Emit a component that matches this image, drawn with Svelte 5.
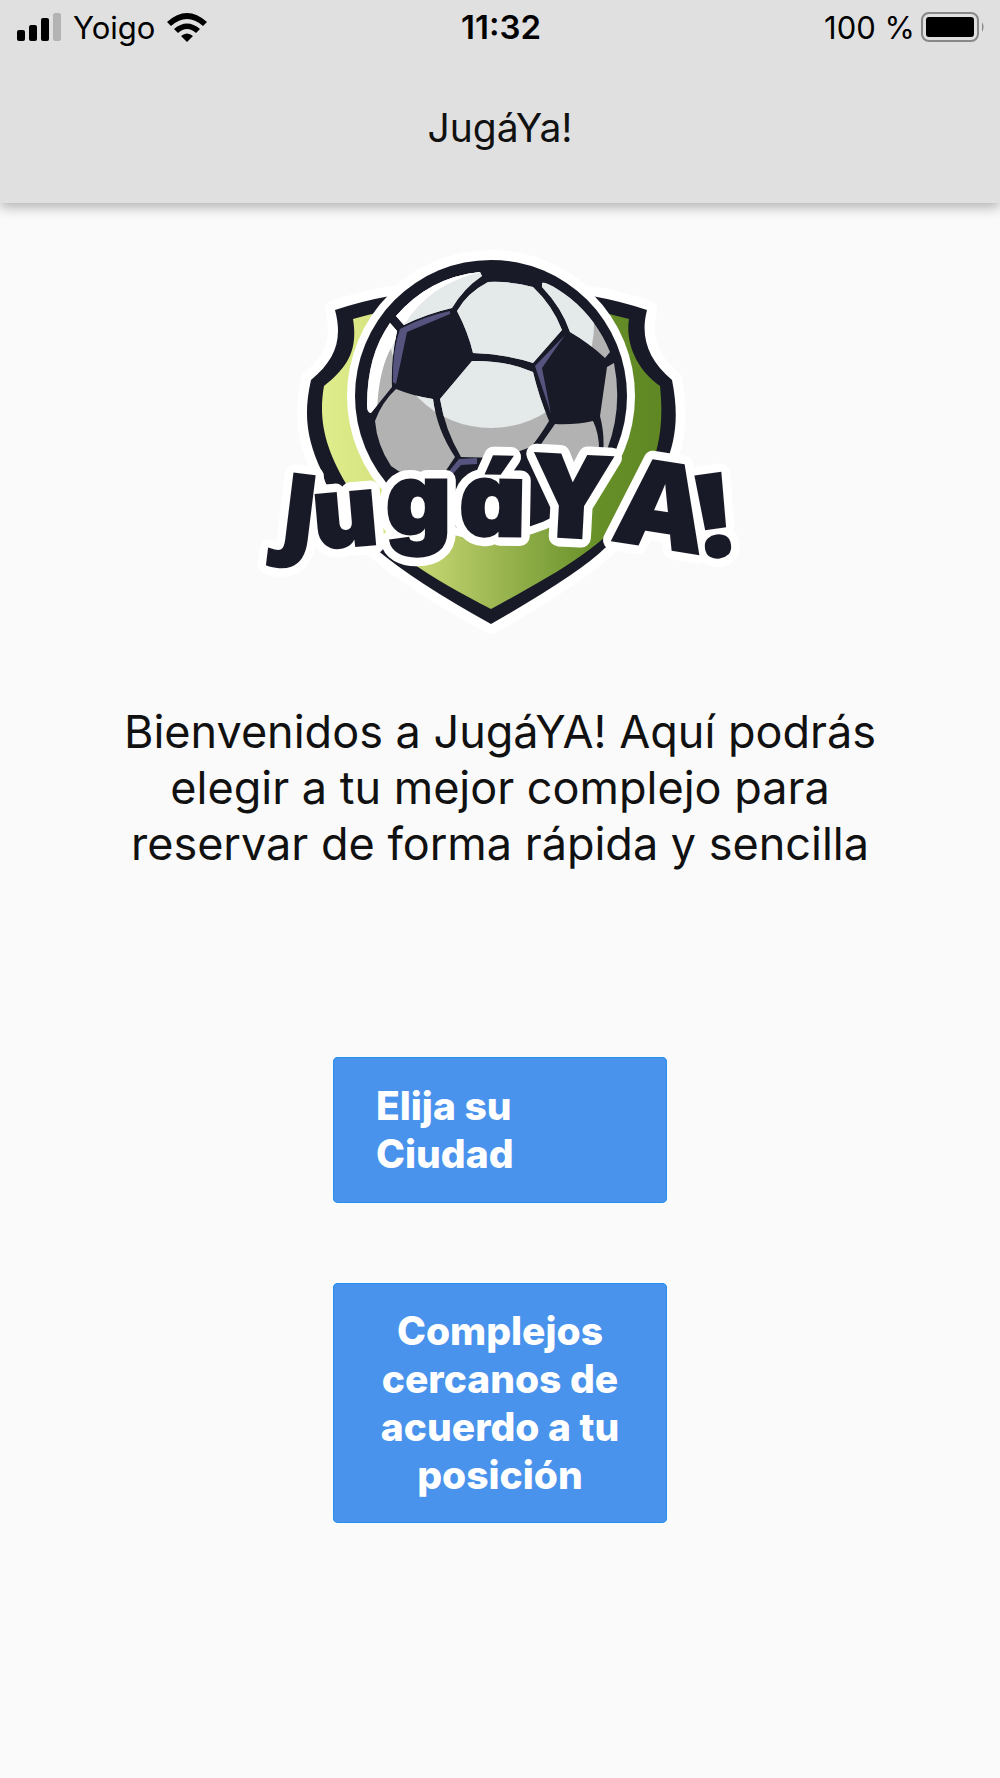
<script lang="ts">
  const carrier = "Yoigo";
  const time = "11:32";
  const battery = 100;

  // each letter of the wordmark leans a little differently
  const letters = [
    { char: "J", x: 278, y: 544, size: 100, angle: 7, face: "square" },
    { char: "u", x: 316, y: 549, size: 98, angle: -5, face: "round" },
    { char: "g", x: 386, y: 535, size: 100, angle: 0, face: "round" },
    { char: "á", x: 459, y: 535, size: 102, angle: 1, face: "round" },
    { char: "Y", x: 532, y: 535, size: 114, angle: 3, face: "square" },
    { char: "A", x: 613, y: 540, size: 118, angle: 9, face: "square" },
    { char: "!", x: 703, y: 558, size: 114, angle: -8, face: "square" },
  ];
</script>

<div class="page">
  <header class="header">
    <div class="status">
      <div class="status_left">
        <svg class="signal" viewBox="0 0 44 28" aria-hidden="true">
          <rect x="0" y="17" width="8" height="11" rx="2" />
          <rect x="12" y="12" width="8" height="16" rx="2" />
          <rect x="24" y="5" width="8" height="23" rx="2" />
          <rect x="36" y="0" width="8" height="28" rx="2" opacity="0.2" />
        </svg>
        <span>{carrier}</span>
        <svg class="wifi" viewBox="0 0 40 29" aria-hidden="true">
          <path d="M20 29 14 23Q20 18 26 23Z" />
          <path d="M7 16 11 20Q20 12 29 20L33 16Q20 5 7 16Z" />
          <path d="M0 9 4 13Q20-1 36 13L40 9Q20-9 0 9Z" />
        </svg>
      </div>
      <strong class="time">{time}</strong>
      <div class="status_right">
        <span>{battery} %</span>
        <svg class="battery" viewBox="0 0 64 30" aria-hidden="true">
          <rect
            x="1"
            y="1"
            width="56"
            height="28"
            rx="7"
            fill="none"
            stroke="#888"
            stroke-width="2"
          />
          <rect x="5" y="5" width="48" height="20" rx="3" />
          <path d="M61 10Q64 15 61 20Z" fill="#888" />
        </svg>
      </div>
    </div>
    <h1 class="title">JugáYa!</h1>
  </header>

  <main class="content">
    <svg class="logo" viewBox="250 240 500 400" role="img" aria-label="JugáYA!">
      <defs>
        <linearGradient id="grass" x1="0" x2="1">
          <stop offset="0" stop-color="#e0ed8c" />
          <stop offset="0.22" stop-color="#d3e07c" />
          <stop offset="0.5" stop-color="#9fb954" />
          <stop offset="0.82" stop-color="#668f28" />
          <stop offset="1" stop-color="#5f8824" />
        </linearGradient>
        <path
          id="shield"
          d="M335 310Q362 301 390 296L592 296Q620 301 647 310C640 337 648 360 672 380C679 415 676 440 665 466C650 505 630 530 605 548Q580 573 491 624Q415 582 376 549C350 528 330 500 322 472C307 440 303 415 311 380C335 360 343 340 335 310Z"
        />
        <clipPath id="panels">
          <path
            d="M396 316Q430 277 480 272L482 276Q464 288 452 308Q426 314 404 325Z"
          />
          <path
            d="M457 311Q467 293 488 282Q512 281 533 287Q553 306 562 330L533 363Q505 354 473 353Q468 332 457 311Z"
          />
          <path
            d="M542 283Q547 281 570 298Q597 320 610 352L605 358Q589 343 570 332Q562 308 542 287Z"
          />
          <path
            d="M390 323 397 331Q391 358 392 387L371 413Q367 413 367 405Q367 355 390 323Z"
          />
          <path
            d="M396 389Q413 396 433 399Q437 430 455 457L445 472H400L391 466Q377 445 375 421Q382 402 396 389Z"
          />
          <path
            d="M472 361Q505 360 533 372Q539 397 549 421Q540 436 531 447L500 458L461 457Q445 430 440 399Z"
          />
          <path
            d="M555 424Q575 425 593 421Q600 435 599 455L580 490H560L530 460Z"
          />
          <path
            d="M607 367 614 363Q623 408 607 450L603 455Q605 435 600 416Z"
          />
        </clipPath>
        <g id="wordmark">
          {#each letters as { char, x, y, size, angle, face }}
            <text
              class={face}
              {x}
              {y}
              font-size={size}
              transform="rotate({angle} {x} {y})">{char}</text
            >
          {/each}
        </g>
      </defs>

      <use href="#shield" class="halo" />
      <circle cx="491" cy="396" r="146" fill="#fff" />
      <use href="#shield" fill="#191a27" />
      <path
        d="M353 319Q420 300 491 300Q560 300 629 319C625 343 637 370 660 386C664 425 659 450 646 480C625 535 570 566 491 609C420 572 375 545 350 490C325 450 318 420 324 386C348 367 358 350 353 319Z"
        fill="url(#grass)"
      />
      <circle cx="491" cy="396" r="144" fill="#fff" />
      <circle cx="491" cy="396" r="136" fill="#191a27" />

      <g clip-path="url(#panels)">
        <rect x="355" y="260" width="272" height="272" fill="#b2b2b2" />
        <circle cx="491" cy="325" r="103" fill="#e4e9ea" />
        <path
          d="M355 260H482V272Q430 283 404 325L389 352Q378 375 377 413H355Z"
          fill="#fff"
        />
      </g>

      <g fill="#56547f">
        <path
          d="M400 329Q425 316 450 311V314L407 332 396 384 393 382Q392 352 400 329Z"
        />
        <path d="M565 335 535 366 551 414 542 368Z" />
        <path d="M459 459 477 458V464L461 465 451 476H445Z" />
      </g>

      <use href="#wordmark" class="halo" />
      <use href="#wordmark" class="ink" />
    </svg>

    <p class="welcome">
      Bienvenidos a JugáYA! Aquí podrás elegir a tu mejor complejo para reservar
      de forma rápida y sencilla
    </p>

    <div class="actions">
      <button class="action action_city" type="button">Elija su Ciudad</button>
      <button class="action" type="button">
        Complejos cercanos de acuerdo a tu posición
      </button>
    </div>
  </main>
</div>

<style>
  :global(body) {
    margin: 0;
    background-color: #fafafa;
  }

  .page {
    min-height: 100vh;
    background-color: #fafafa;
    color: #111;
    font-family: Inter, "Liberation Sans", sans-serif;
  }

  .header {
    position: relative;
    box-sizing: border-box;
    padding-bottom: 50px;
    background-color: #e0e0e0;
    box-shadow: 0 4px 12px rgb(0 0 0 / 0.3);
  }
  .status {
    display: grid;
    grid-template-columns: 1fr auto 1fr;
    align-items: center;
    height: 54px;
    padding: 0 15px 0 17px;
    color: #000;
    font-size: 31px;
  }
  .status_left,
  .status_right {
    display: flex;
    align-items: center;
  }
  .status_left {
    gap: 12px;
  }
  .status_right {
    justify-content: flex-end;
    gap: 6px;
  }
  .signal {
    width: 44px;
    height: 28px;
  }
  .wifi {
    width: 40px;
    height: 29px;
  }
  .battery {
    width: 64px;
    height: 30px;
  }
  .time {
    font-size: 33px;
    font-weight: 600;
  }
  .title {
    margin: 0;
    padding-top: 49px;
    font-size: 39px;
    font-weight: 400;
    line-height: 50px;
    text-align: center;
  }

  .content {
    display: flex;
    flex-direction: column;
    align-items: center;
    padding-top: 37px;
  }
  .logo {
    width: 50%;
  }
  .halo {
    fill: #fff;
    stroke: #fff;
    stroke-width: 20px;
    stroke-linejoin: round;
  }
  .ink {
    fill: #191a27;
    stroke: #191a27;
    stroke-width: 3px;
  }
  .square {
    font-family: "Open Sans", sans-serif;
    font-weight: 800;
  }
  .round {
    font-family: Inter, sans-serif;
    font-weight: 900;
    /* single-storey a */
    font-feature-settings: "cv11";
  }

  .welcome {
    width: 78%;
    margin: 64px 0 0;
    font-size: 45px;
    line-height: 56px;
    text-align: center;
  }

  .actions {
    display: flex;
    flex-direction: column;
    gap: 80px;
    width: 100%;
    align-items: center;
    padding: 185px 0 80px;
  }
  .action {
    box-sizing: border-box;
    width: 334px;
    padding: 24px 43px;
    border: none;
    border-radius: 5px;
    background-color: #4993ec;
    box-shadow: inset 0 0 0 1px #2490f0;
    color: #fff;
    font: inherit;
    font-size: 39px;
    font-weight: 800;
    line-height: 48px;
    text-align: center;
    cursor: pointer;
  }
  .action_city {
    padding: 25px 120px 25px 43px;
    text-align: left;
  }
</style>
